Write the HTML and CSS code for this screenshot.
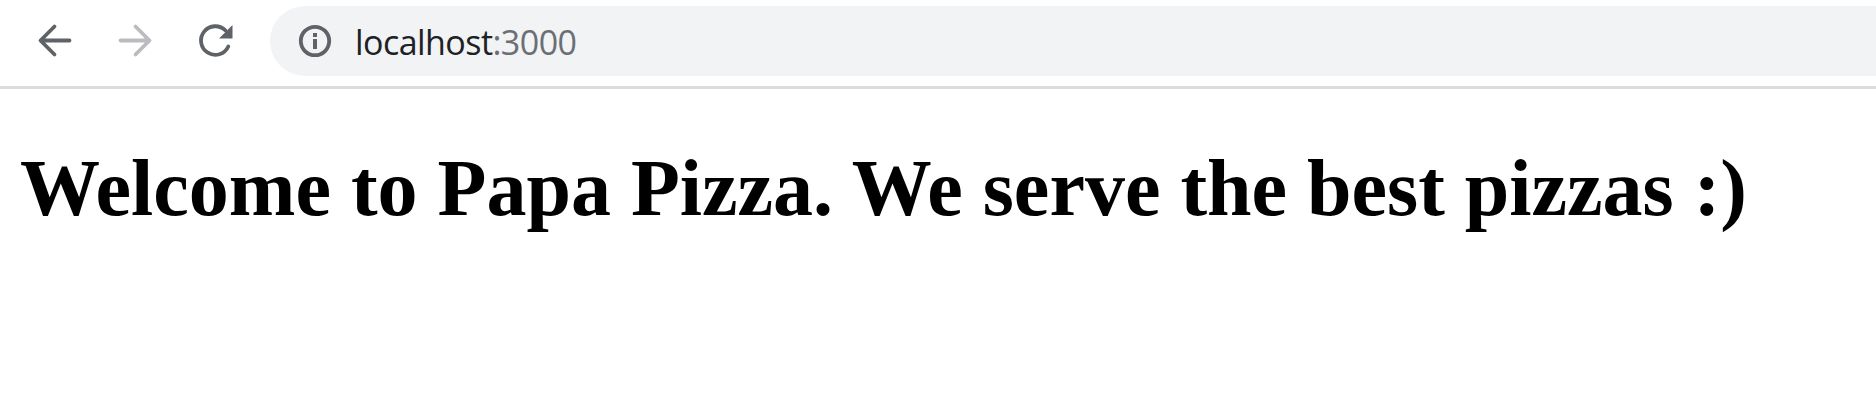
FILE: index.html
```html
<!DOCTYPE html>
<html lang="en">
<head>
<meta charset="utf-8">
<title>Papa Pizza</title>
<link rel="stylesheet" href="styles.css">
</head>
<body>
<header class="toolbar">
  <div class="nav">
    <svg class="icon" viewBox="0 0 40 40"><path d="M34.500 19.500H6M19.500 5.500L5.500 19.500l14 14"/></svg>
    <svg class="icon disabled" viewBox="0 0 40 40"><path d="M5.500 19.500H34M20.500 5.500l14 14-14 14"/></svg>
    <svg class="icon" viewBox="0 0 40 40"><path d="M30.500 9.500A14.300 14.300 0 1 0 33.300 25.500"/><path class="solid" d="M37.500 4v13.500H24z"/></svg>
  </div>
  <div class="address">
    <svg class="info" viewBox="0 0 38 38"><circle cx="19" cy="19" r="14.200"/><path class="solid" d="M17 11h4v4h-4zM17 17h4v10h-4z"/></svg>
    <span class="url">localhost<span class="port">:3000</span></span>
  </div>
</header>
<main class="page"><h1 class="title">Welcome to Papa Pizza. We serve the best pizzas :)</h1></main>
</body>
</html>
```
FILE: styles.css
```css
body { margin: 0; background: #fff; overflow: hidden; }
.toolbar { display: flex; height: 86px; box-sizing: content-box; border-bottom: 3px solid #dadce0; }
.nav { display: flex; gap: 40px; padding: 21px 0 0 35px; width: 235px; box-sizing: border-box; }
.icon, .info { flex: none; fill: none; stroke: #5f6368; stroke-width: 3.8; stroke-linecap: round; stroke-linejoin: round; color: #5f6368; }
.icon { width: 40px; height: 40px; }
.solid { fill: currentColor; stroke: none; }
.disabled { stroke: #babcbf; }
.address { display: flex; align-items: center; flex: 1; height: 70px; margin-top: 6px; margin-left: 35px; padding-left: 26px; background: #f1f3f4; border-radius: 35px 0 0 35px; }
.info { width: 38px; height: 38px; }
.url { margin-left: 21px; padding-top: 2px; font: 34px "Open Sans", sans-serif; letter-spacing: -0.55px; color: #202124; white-space: nowrap; }
.port { color: #6b6f74; }
.page { padding: 53px 20px; }
.title { margin: 0; font: bold 80px/92px "Liberation Serif", serif; color: #000; white-space: nowrap; }
```
